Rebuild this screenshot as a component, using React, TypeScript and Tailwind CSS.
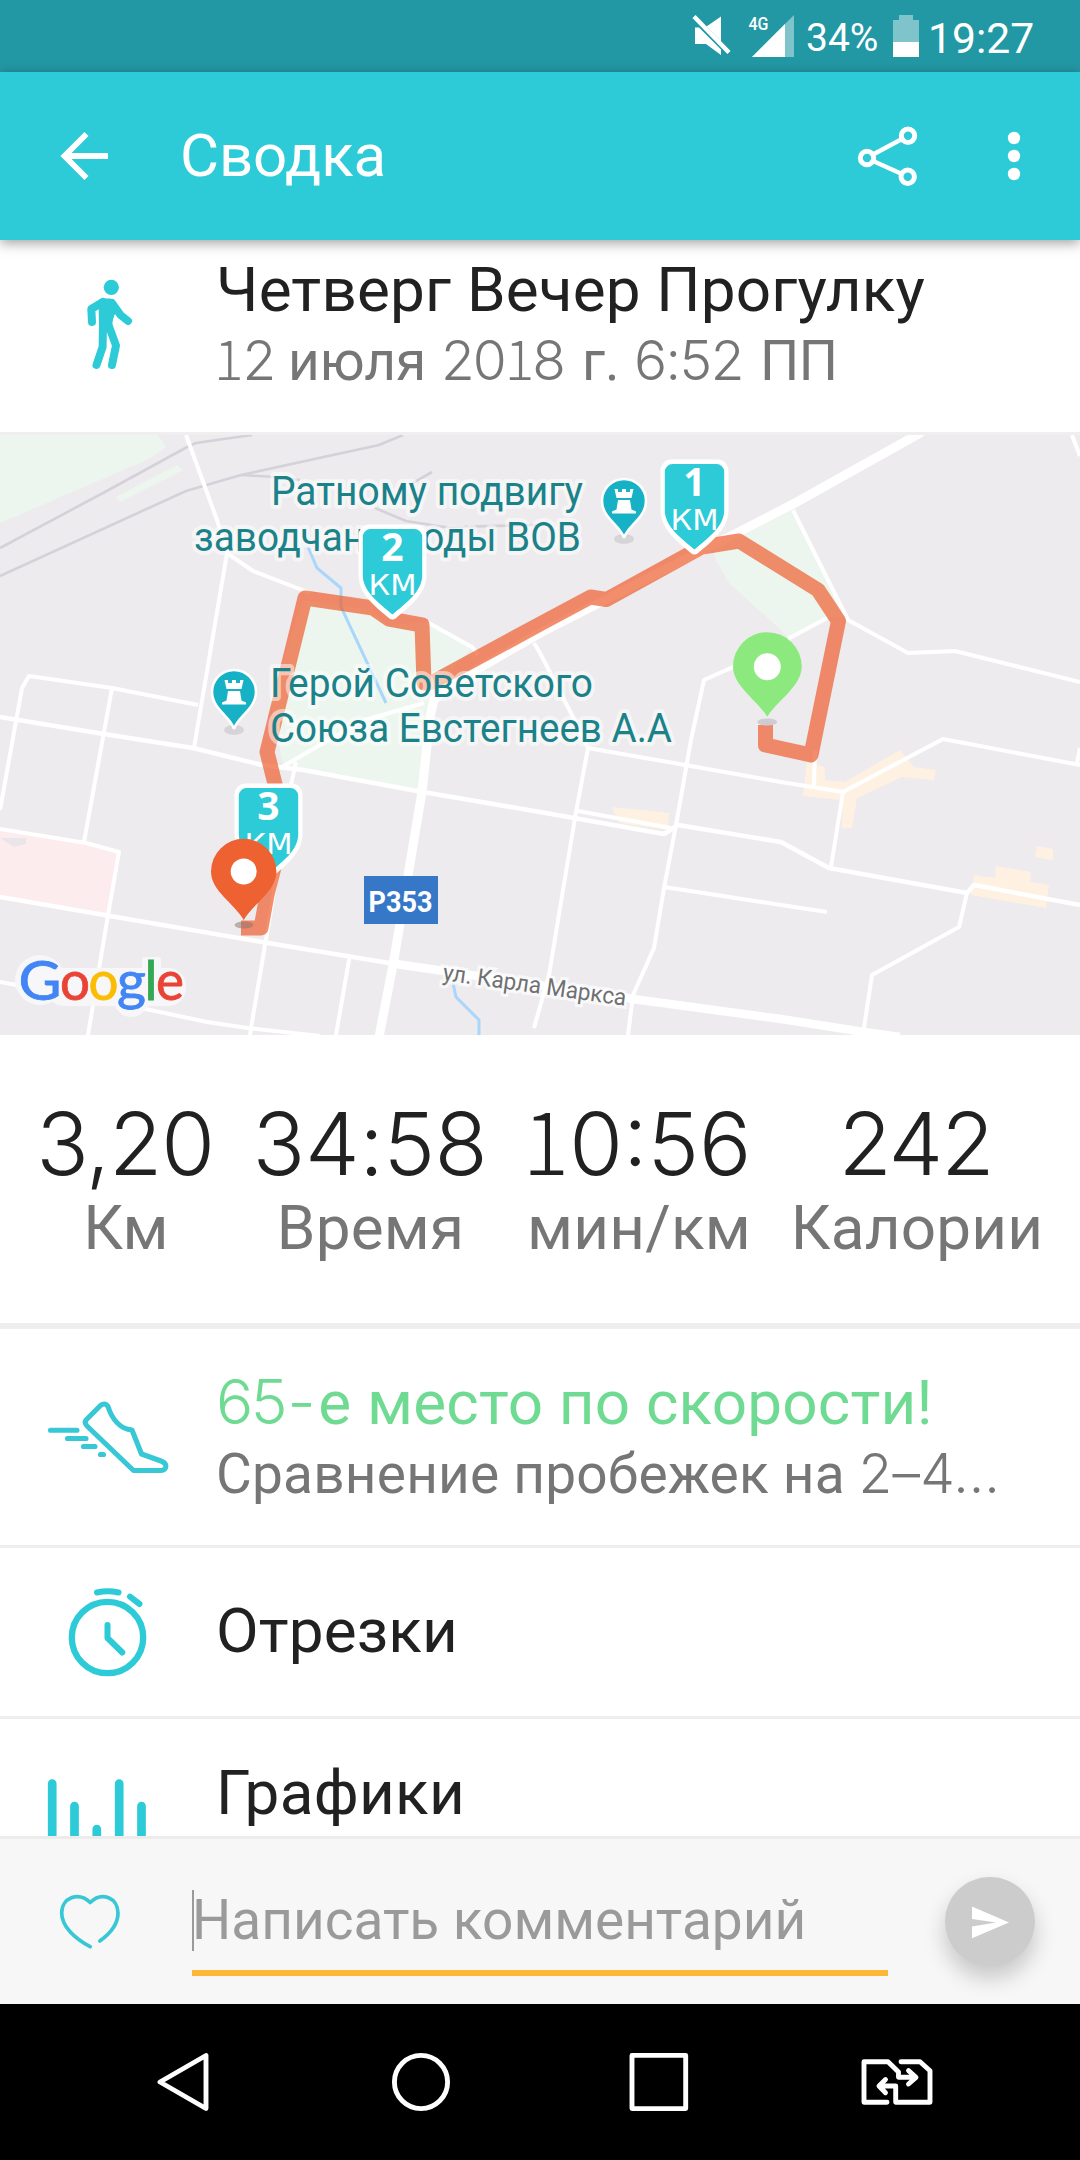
import React from 'react';

// Digits use a lighter face than the surrounding Cyrillic text
const Num: React.FC<{ children: string }> = ({ children }) => (
  <span className="font-['Inter','Noto_Sans',sans-serif] font-light leading-[0]">
    {children.split(/(1)/).filter(Boolean).map((part, i) =>
      part === '1' ? <span key={i} className="font-['Noto_Sans_CJK_JP',sans-serif]">1</span> : part
    )}
  </span>
);

const StatusBar: React.FC = () => (
  <div className="flex h-[72px] shrink-0 items-center bg-[#2398a5] text-white">
    <svg className="ml-[680px] h-[72px] w-[126px] shrink-0" viewBox="680 0 126 72" fill="#fff">
      <path d="M706.5 26.5 721 16.5V41.5ZM695 27.5H699L721 49.5V55L706 44H695Z" />
      <path d="M694 16.5 729 52.5" stroke="#fff" strokeWidth="4.4" />
      <path d="M752 57 794 15V57Z" opacity=".42" />
      <path d="M752 57 785 24V57Z" />
      <text x="748.5" y="30" fontSize="18" fontWeight="500" fontFamily="Roboto, sans-serif" textLength="20" lengthAdjust="spacingAndGlyphs">4G</text>
    </svg>
    <span className="w-[80px] pt-[4px] text-[39px] leading-[46px]">34%</span>
    <svg className="h-[72px] w-[42px] shrink-0" viewBox="886 0 42 72" fill="#fff">
      <path d="M899 15H913V20H919V42H893V20H899Z" opacity=".42" />
      <path d="M893 42H919V57H893Z" />
    </svg>
    <span className="pt-[3px] text-[42.6px] leading-[46px]">19:27</span>
  </div>
);

const Header: React.FC = () => (
  <header className="relative z-10 flex h-[168px] shrink-0 items-center bg-[#2dcad7] text-white shadow-[0_3px_12px_rgba(0,0,0,0.38)]">
    <svg className="h-[168px] w-[180px] shrink-0" viewBox="0 72 180 168" fill="none" stroke="#fff" strokeWidth="5.8">
      <path d="M108 156H65M86.5 134 64.5 156 86.5 178" />
    </svg>
    <h1 className="text-[60px] leading-[70px] tracking-[-0.12px]">Сводка</h1>
    <svg className="ml-auto h-[168px] w-[240px] shrink-0" viewBox="840 72 240 168" fill="none" stroke="#fff" strokeWidth="5">
      <path d="M873 154.5 902 139M873 161 902 174" strokeWidth="4.4" />
      <circle cx="867" cy="158" r="6.7" />
      <circle cx="908" cy="135.7" r="6.7" />
      <circle cx="907.7" cy="176.7" r="6.7" />
      <g fill="#fff" stroke="none">
        <circle cx="1014" cy="138" r="6.2" />
        <circle cx="1014" cy="156" r="6.2" />
        <circle cx="1014" cy="174" r="6.2" />
      </g>
    </svg>
  </header>
);

const PoiPin: React.FC<{ x: number; y: number }> = ({ x, y }) => (
  <g transform={`translate(${x} ${y})`}>
    <ellipse cx="0" cy="38" rx="10" ry="5" fill="#d6d4d8" />
    <path d="M0 37C-3 25-22 17-22 0A22 22 0 0 1 22 0C22 17 3 25 0 37Z" fill="#17b1c5" stroke="#fff" strokeWidth="2.6" />
    <path
      d="M-9.5-12H-6V-9H-2V-12H2V-9H6V-12H9.5L7.5-3H-7.5ZM-6-1H6L7.5 8.5 12 10.5V12.5H-12V10.5L-7.5 8.5Z"
      fill="#fff"
    />
  </g>
);

const KmMarker: React.FC<{ x: number; y: number; km: number }> = ({ x, y, km }) => (
  <g transform={`translate(${x} ${y})`} fill="#fff" textAnchor="middle">
    <path d="M-23-2H23A11 11 0 0 1 34 9V48C34 68 17 80 3 92Q0 94-3 92C-17 80-34 68-34 48V9A11 11 0 0 1-23-2Z" />
    <path d="M-22 2.5H22A8 8 0 0 1 29.7 10V49C29.7 65 13 77 0 88C-13 77-29.7 65-29.7 49V10A8 8 0 0 1-22 2.5Z" fill="#2dcad7" />
    <text x="0" y="34.5" fontSize="39" fontWeight="700" fontFamily="'Open Sans', sans-serif">{km}</text>
    <text x="0" y="68" fontSize="28" fontFamily="'DejaVu Sans', sans-serif" textLength="48" lengthAdjust="spacingAndGlyphs">КМ</text>
  </g>
);

const MapLabel: React.FC<{ x: number; y: number; w: number; children: string }> = ({ x, y, w, children }) => (
  <text
    x={x}
    y={y}
    textLength={w}
    lengthAdjust="spacingAndGlyphs"
    fontSize="40"
    fontFamily="Roboto, sans-serif"
    fill="#1b828a"
    stroke="#fff"
    strokeOpacity=".5"
    strokeWidth="8"
    strokeLinejoin="round"
    paintOrder="stroke"
  >
    {children}
  </text>
);

const googleLetters = [
  { ch: 'G', x: 18.5, w: 43, fill: '#4285f4' },
  { ch: 'o', x: 60, w: 30, fill: '#e94335' },
  { ch: 'o', x: 88.5, w: 30, fill: '#fbbc05' },
  { ch: 'g', x: 117, w: 29, fill: '#4285f4' },
  { ch: 'l', x: 144.5, w: 13, fill: '#34a853' },
  { ch: 'e', x: 156, w: 28, fill: '#e94335' },
];

const RouteMap: React.FC = () => (
  <svg className="block h-[600px] w-full shrink-0" viewBox="0 435 1080 600">
    <rect x="0" y="435" width="1080" height="600" fill="#edebee" />

    {/* Parks */}
    <g fill="#edf6ee">
      <path d="M0 435H158L166 447 151 458 0 523Z" />
      <path d="M116 497 177 465 183 470 120 502Z" />
      <path d="M793 510 743 530 712 543 716 560 729 583 781 630 788 638 827 618 845 617Z" />
      <path d="M303 600 370 609 388 625 427 622 472 648 434 690 420 791 283 765 270 700Z" />
    </g>
    <path d="M0 831 86 843 119 852 107 914 0 897Z" fill="#fdeced" />
    <path d="M0 838H26V844L14 847Z" fill="#e9e5e8" />

    {/* Commercial blocks */}
    <g fill="#fef1e2">
      <path d="M807 762 825 767V780L845 782 900 750 914 767 936 770 934 780 902 777 857 798 852 828H842L843 800 803 796Z" />
      <path d="M612 807 669 813 668 830 619 823Z" />
      <path d="M974 875 995 878 996 866 1031 872 1030 882 1049 885 1046 908 971 895Z" />
      <path d="M1037 846 1053 849V860L1035 857Z" />
    </g>

    {/* Railways */}
    <g fill="none" stroke="#d4d2d8" strokeWidth="2.6">
      <path d="M0 548 103 493 189 446 196 443 252 435" />
      <path d="M0 576 186 491 241 475 379 445 403 435" />
      <path d="M241 475 275 477 300 480M413 483 432 472M375 508 406 521 444 527 540 525" />
    </g>

    {/* Streets */}
    <g fill="none" stroke="#fff" strokeWidth="4" strokeLinejoin="round">
      <path d="M186 435 217 520 227 553 194 748" />
      <path d="M227 553 253 571 310 593M427 622 472 647 478 655" />
      <path d="M0 829 86 843 119 852 108 915 88 1035" />
      <path d="M0 810 22 688 29 676 112 688 198 705" />
      <path d="M112 688 84 842" />
      <path d="M0 717 110 735 193 748 262 765 303 770 417 791 540 812 664 834 678 825 781 842 829 868 967 893 974 885 1080 905" strokeWidth="4.5" />
      <path d="M424 703 365 720 320 745 282 767M296 762 291 785 274 892 251 1028 250 1035" />
      <path d="M0 897 110 916 262 942 389 963" strokeWidth="4.5" />
      <path d="M349.5 957 336 1035M0 982 141 1008 207 1022 248 1028 320 1036" />
      <path d="M534 643 540 653 573 717 588 748 576 812 561 902 549 975 534 1028" />
      <path d="M588 748 685 765 781 782 843 792 943 739 1080 765" />
      <path d="M790 640 733 667 704 680 691 740 676 825 664 888 654 948 633 995 628 1035" />
      <path d="M578 811 671 828M664 887 781 905 827 912" />
      <path d="M793 510 848 620 908 653 955 651 1080 682M827 618 788 639" />
      <path d="M1072 435 1080 456M1080 748 1077 763M815 750 814 785M843 792 831 867" />
      <path d="M967 893 959 927 872 975 864 1028" />
      <path d="M389 963 444 971 633 999 781 1019 864 1032 900 1037" strokeWidth="8.5" />
      <path d="M922 432 795 503 733 535 540 633 447 687 434 700 430 717 422 792 393 965 379 1037" strokeWidth="9" />
    </g>

    {/* River */}
    <path
      d="M308 547 317 568 341 588V607L386 703M453 983 456 997 479 1020V1035"
      fill="none"
      stroke="#a9d7fb"
      strokeWidth="3"
    />

    {/* Track */}
    <path
      d="M765.5 725V745L811 755 838.5 621 818 590 739 541 702 547 691 553 606.5 599.5 590.5 597 540 624 433 682 424 683 422 625 389 619 373 608 305 598 267 752 277 792 281 840 267 895 261 928H241"
      fill="none"
      stroke="#ed5c2c"
      strokeOpacity=".69"
      strokeWidth="15"
      strokeLinejoin="round"
    />

    <MapLabel x={271} y={505.3} w={312}>Ратному подвигу</MapLabel>
    <MapLabel x={194} y={550.7} w={387}>заводчан в годы ВОВ</MapLabel>
    <MapLabel x={270} y={696.7} w={323}>Герой Советского</MapLabel>
    <MapLabel x={270} y={742.3} w={402}>Союза Евстегнеев А.А</MapLabel>

    <PoiPin x={624} y={501} />
    <PoiPin x={234} y={692} />

    <rect x="364" y="876" width="74" height="48" fill="#3677c8" />
    <text x="368.5" y="911.5" fontSize="29" fontWeight="700" fontFamily="Roboto, sans-serif" fill="#fff" textLength="64" lengthAdjust="spacingAndGlyphs">P353</text>

    <text
      transform="translate(442 980) rotate(8)"
      fontSize="23.5"
      fontFamily="Roboto, sans-serif"
      fill="#6f7072"
      stroke="#fff"
      strokeOpacity=".7"
      strokeWidth="6"
      paintOrder="stroke"
      textLength="185"
      lengthAdjust="spacingAndGlyphs"
    >
      ул. Карла Маркса
    </text>

    <KmMarker x={694.5} y={461.5} km={1} />
    <KmMarker x={392.5} y={526.5} km={2} />
    <KmMarker x={268.5} y={785.5} km={3} />

    {/* Start and finish pins */}
    <ellipse cx="767.3" cy="722" rx="10" ry="3.5" fill="#cfccd1" />
    <path d="M767.3 716.7C757 700 733 686 733 666.5A34.3 34.3 0 0 1 801.7 666.5C801.7 686 778 700 767.3 716.7Z" fill="#8ce97e" />
    <circle cx="767.3" cy="666.7" r="13.5" fill="#fff" />
    <ellipse cx="244" cy="925" rx="9.5" ry="3.5" fill="#8c6f6c" opacity=".5" />
    <path d="M243.7 920C234 903 211 891 211 871.5A32.7 32.7 0 0 1 276.4 871.5C276.4 891 254 903 243.7 920Z" fill="#ee6130" />
    <circle cx="243.7" cy="871.5" r="13" fill="#fff" />

    {/* Attribution */}
    <g fill="#f7f7fa">
      <circle cx="40" cy="980" r="25" />
      <rect x="46" y="968" width="140" height="38" rx="18" />
      <rect x="142" y="957" width="19" height="48" rx="3" />
      <circle cx="131" cy="1000" r="17" />
    </g>
    <g fontSize="54" fontFamily="Lato, sans-serif">
      {googleLetters.map((l) => (
        <text key={l.x} x={l.x} y="999.5" fill={l.fill} stroke={l.fill} strokeWidth=".8" textLength={l.w} lengthAdjust="spacingAndGlyphs">{l.ch}</text>
      ))}
    </g>
  </svg>
);

const stats = [
  { value: '3,20', label: 'Км', col: 'w-[252px]', track: 'tracking-[-1.3px] pr-[2px]' },
  { value: '34:58', label: 'Время', col: 'w-[237px]', track: 'tracking-[-0.4px] pr-[1px]' },
  { value: '10:56', label: 'мин/км', col: 'w-[300px]', track: 'pr-[4px]' },
  { value: '242', label: 'Калории', col: 'w-[256px]', track: 'tracking-[-2px] pr-[3px]' },
];

export default function App() {
  return (
    <div className="flex h-[2160px] w-[1080px] flex-col overflow-hidden bg-white font-['Roboto',sans-serif] text-[#212121]">
      <StatusBar />
      <Header />

      <main className="flex h-[1596px] shrink-0 flex-col overflow-hidden">
        {/* Activity title */}
        <section className="flex h-[195px] shrink-0 border-b-[3px] border-[#f0eff0]">
          <svg className="h-[192px] w-[216px] shrink-0" viewBox="0 240 216 192" fill="none" stroke="#2dcad7" strokeWidth="8" strokeLinecap="round" strokeLinejoin="round">
            <circle cx="111.3" cy="287.3" r="7.6" fill="#2dcad7" stroke="none" />
            <path d="M92 322 91.3 309 103 302M112 303 120.5 315 128 321" />
            <path d="M102.5 302.5H110L113 307 109 319 108 326H103Z" fill="#2dcad7" />
            <path d="M103 325 102.6 347 96.5 365M108.5 325 116 345.5 112 365" />
          </svg>
          <div className="pt-[14px]">
            <h2 className="text-[62px] leading-[72px] tracking-[0.19px]">Четверг Вечер Прогулку</h2>
            <div className="mt-[2px] flex text-[55px] leading-[66px] text-[#767676]">
              <span className="-ml-[2px] w-[74px] tracking-[-1px]"><Num>12</Num></span>
              <span className="w-[153px]">июля</span>
              <span className="w-[141px] tracking-[-2px]"><Num>2018</Num></span>
              <span className="w-[52px]">г.</span>
              <span className="w-[126px] tracking-[-1.5px]"><Num>6:52</Num></span>
              <span className="tracking-[-0.5px]">ПП</span>
            </div>
          </div>
        </section>

        <RouteMap />

        <section className="flex h-[294px] shrink-0 border-b-[6px] border-[#eeeeee] pt-[65px] text-center">
          {stats.map((s) => (
            <div key={s.label} className={s.col}>
              <div className={`text-[87px] leading-[90px] ${s.track}`}><Num>{s.value}</Num></div>
              <div className="mt-[2px] text-[62px] leading-[72px] tracking-[0.2px] text-[#767676]">{s.label}</div>
            </div>
          ))}
        </section>

        <section className="flex h-[219px] shrink-0 border-b-[3px] border-[#eeeeee]">
          <svg className="h-[216px] w-[216px] shrink-0" viewBox="0 1329 216 216" fill="none" stroke="#38c8d5" strokeWidth="5.1" strokeLinecap="round" strokeLinejoin="round">
            <path d="M86 1420 100.5 1405.5Q105 1402 108 1406.5C112 1419 120 1429 132 1430L141.5 1454 161 1461C168 1463.5 167 1470.5 161 1470.5H133.5L87 1426Q84 1423 86 1420Z" />
            <path d="M50.5 1430.3H77M67.5 1438.5H86M83.5 1446.5H95M100.5 1454.5H103.5" />
          </svg>
          <div className="pt-[38px]">
            <h3 className="text-[62px] leading-[72px] tracking-[0.2px] text-[#6fda92]">
              <span className="tracking-[-2.5px]"><Num>65</Num></span><span className="px-[2.5px]"><Num>-</Num></span>е место по скорости!
            </h3>
            <p className="mt-[2px] text-[55px] leading-[66px] tracking-[0.2px] text-[#767676]">
              Сравнение пробежек на <Num>2–4…</Num>
            </p>
          </div>
        </section>

        <section className="flex h-[171px] shrink-0 items-center border-b-[3px] border-[#eeeeee]">
          <svg className="h-[168px] w-[216px] shrink-0" viewBox="0 1548 216 168" fill="none" stroke="#2dcad7" strokeWidth="6" strokeLinecap="round" strokeLinejoin="round">
            <circle cx="107.5" cy="1637.5" r="35.7" strokeWidth="6.3" />
            <path d="M107.5 1625V1638L122.3 1652.5M97 1592.5Q107.5 1590 118.5 1592.5M130 1596.7 139.5 1604" />
          </svg>
          <h3 className="pb-[2px] text-[62px] leading-[72px] tracking-[0.14px]">Отрезки</h3>
        </section>

        <section className="flex h-[171px] shrink-0">
          <svg className="h-[168px] w-[216px] shrink-0" viewBox="0 1719 216 168" fill="none" stroke="#2dcad7" strokeWidth="8.7" strokeLinecap="round">
            <path d="M52.2 1783.5V1870M74.5 1806V1870M96.8 1829V1870M119.2 1783.5V1870M141.5 1806V1870" />
          </svg>
          <h3 className="pt-[38px] text-[62px] leading-[72px] tracking-[0.3px]">Графики</h3>
        </section>
      </main>

      {/* Comment field */}
      <div className="flex h-[168px] shrink-0 items-start border-t-[3px] border-[#ececec] bg-[#f7f7f7]">
        <svg className="h-[165px] w-[192px] shrink-0" viewBox="0 1839 192 165" fill="none" stroke="#38c8d5" strokeWidth="3.7" strokeLinecap="round" strokeLinejoin="round">
          <path d="M90.2 1946.7C74 1938 61.7 1926 61.7 1913C61.7 1898 78 1891 90.2 1902.5C102 1891 118 1898 118 1913C118 1924 111 1933 99.8 1941" />
        </svg>
        <div className="mt-[48px] h-[89px] w-[696px] border-b-[6px] border-[#fdb736]">
          <div className="flex h-[67px] items-center">
            <div className="h-[61px] w-[2px] shrink-0 bg-[#9a9a9a]" />
            <span className="-ml-[2px] whitespace-nowrap pb-[1px] text-[55px] leading-[66px] text-[#9a9a9a]">Написать комментарий</span>
          </div>
        </div>
        <button className="ml-[57px] mt-[38px] h-[89px] w-[90px] rounded-full bg-[#cccccc] shadow-[0_12px_22px_rgba(0,0,0,0.2)]">
          <svg className="h-full w-full" viewBox="945 1876.5 90 89" fill="#fff">
            <path d="M972 1906 1009 1922 972 1937.7V1926L996 1922 972 1918.5Z" />
          </svg>
        </button>
      </div>

      {/* System navigation */}
      <nav className="relative h-[156px] shrink-0 bg-black">
        <svg className="h-[156px] w-full" viewBox="0 2004 1080 156" fill="none" stroke="#fff" strokeWidth="4.9" strokeLinejoin="round" strokeLinecap="round">
          <path d="M160 2082 206 2055.5V2108.5Z" />
          <circle cx="421" cy="2082" r="26.6" />
          <rect x="632" y="2055.4" width="53.7" height="53.2" />
          <path d="M887 2102.3H864V2061.7H888L898.5 2072V2077.3H915.5M908.5 2070.7 916 2077.3 908.5 2084" />
          <path d="M901 2061.7H920L930 2070.7V2102.3H895.7V2086H879.5M885.5 2079.5 879 2086 885.5 2092.7" />
        </svg>
      </nav>
    </div>
  );
}
